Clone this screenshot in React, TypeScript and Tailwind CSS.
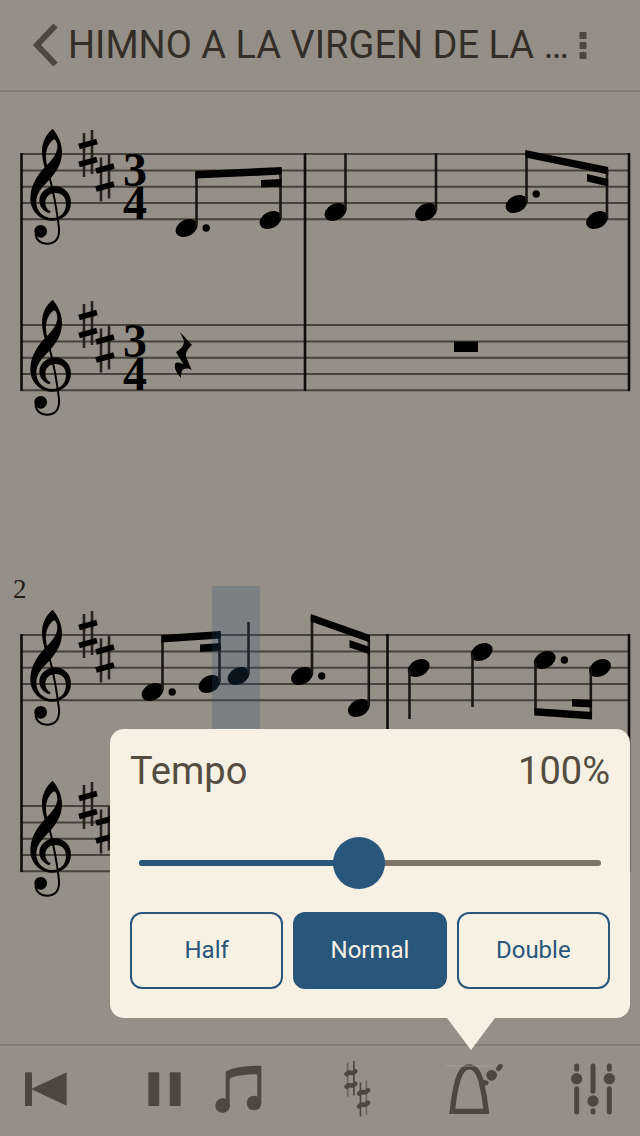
import React, { useState } from 'react';

const STAFF_LINES = [0, 16.4, 32.7, 49, 65.3];
const UPPER_STAFF = 62;
const LOWER_STAFF = 233;

const MIN_TEMPO = 10;
const MAX_TEMPO = 200;

const PRESETS = [
    { label: 'Half', value: 50 },
    { label: 'Normal', value: 100 },
    { label: 'Double', value: 200 },
];

interface NoteProps {
    x: number;
    y: number;
    // y of the free end of the stem
    stem: number;
    down?: boolean;
    dot?: number;
}

function Note({ x, y, stem, down, dot }: NoteProps) {
    const stemX = down ? x - 9.2 : x + 10;
    return (
        <g>
            <ellipse cx={x} cy={y} rx="11.5" ry="8.2" transform={`rotate(-28 ${x} ${y})`} />
            <line x1={stemX} y1={down ? y + 2 : y - 2} x2={stemX} y2={stem} stroke="#191714" strokeWidth="2.6" />
            {dot !== undefined && <circle cx={x + 19.7} cy={dot} r="3.7" />}
        </g>
    );
}

function Beam({ x1, y1, x2, y2 }: { x1: number; y1: number; x2: number; y2: number }) {
    return <polygon points={`${x1},${y1} ${x2},${y2} ${x2},${y2 + 7.6} ${x1},${y1 + 7.6}`} />;
}

function Sharp({ x, y }: { x: number; y: number }) {
    return (
        <g transform={`translate(${x} ${y})`}>
            <path d="M-4 -21V23M4 -24V20" stroke="#24211e" strokeWidth="2.6" />
            <path d="M-9 -7.5L9 -12.5M-9 10.5L9 5.5" stroke="#000" strokeWidth="5.8" />
        </g>
    );
}

function TrebleClef({ y }: { y: number }) {
    return (
        <g transform={`translate(20 ${y - 34}) scale(0.3333)`}>
            <path d="M98 26C112 42 126 68 126 95C126 132 110 154 87 180C64 205 49 220 49 246C49 273 69 294 97 294C123 294 138 275 138 252C138 231 125 219 107 219C89 219 76 231 76 248C76 260 82 269 92 274L88 280C70 273 58 259 58 242C58 218 80 199 106 199C132 199 153 220 153 248C153 280 127 302 97 302C60 302 31 272 31 236C31 200 47 174 65 152C88 127 110 110 112 82C112 70 109 62 103 58C91 63 78 84 78 107C78 130 84 145 89 163L83 165C74 145 66 120 66 95C66 65 80 40 98 26Z" />
            <path d="M86 163Q97 200 105 245Q113 290 117 325Q120 371 80 371Q52 371 46 343" fill="none" stroke="#000" strokeWidth="6" />
            <circle cx="62" cy="334" r="19" />
        </g>
    );
}

function StaffHead({ y, meter }: { y: number; meter?: boolean }) {
    return (
        <g>
            {STAFF_LINES.map((line) => (
                <line key={line} x1="21" x2="630" y1={y + line} y2={y + line} stroke="#46423c" strokeWidth="2" />
            ))}
            <TrebleClef y={y} />
            <Sharp x={88} y={y} />
            <Sharp x={105} y={y + 24.5} />
            {meter && (
                <text className="font-['Liberation_Serif',serif] text-[48px] font-bold" textAnchor="middle">
                    <tspan x="135" y={y + 32}>3</tspan>
                    <tspan x="135" y={y + 65}>4</tspan>
                </text>
            )}
        </g>
    );
}

function Barlines({ xs }: { xs: number[] }) {
    return (
        <g stroke="#0e0d0b" strokeWidth="2.6">
            {xs.map((x) => (
                <line key={x} x1={x} x2={x} y1={UPPER_STAFF - 1} y2={LOWER_STAFF + 66} />
            ))}
        </g>
    );
}

function FirstSystem() {
    return (
        <svg viewBox="0 0 640 481" className="block w-full" role="img" aria-label="Measure 1">
            <StaffHead y={UPPER_STAFF} meter />
            <StaffHead y={LOWER_STAFF} meter />
            <Barlines xs={[21.5, 305, 629]} />

            <Note x={186.5} y={136} stem={80} dot={136} />
            <Note x={270.5} y={128} stem={77} />
            <Beam x1={195.3} y1={79} x2={281.7} y2={75} />
            <Beam x1={261} y1={88} x2={281.7} y2={87} />

            <Note x={335.5} y={120} stem={61} />
            <Note x={426} y={120} stem={61} />
            <Note x={516.5} y={112} stem={60} dot={102} />
            <Note x={597} y={128} stem={77} />
            <Beam x1={525.3} y1={58} x2={608.2} y2={75} />
            <Beam x1={587} y1={82} x2={608.2} y2={87} />

            {/* quarter rest */}
            <path
                transform="translate(0 188) scale(0.3333)"
                d="M540 156L576 195C560 210 554 222 560 234L575 270C555 260 541 267 543 294C530 280 520 262 526 250C532 246 540 248 550 253L528 216C545 205 553 195 552 182Z"
            />
            {/* whole rest */}
            <rect x="454" y="249.5" width="24" height="10.5" />
        </svg>
    );
}

function SecondSystem() {
    return (
        <svg viewBox="0 0 640 360" className="block w-full" role="img" aria-label="Measures 2 and 3">
            <text x="13" y="25" fill="#1f1c19" className="font-['Liberation_Serif',serif] text-[27px]">2</text>
            <StaffHead y={UPPER_STAFF} />
            <StaffHead y={LOWER_STAFF} />
            <Barlines xs={[21.5, 387.5, 629]} />

            <Note x={152.5} y={119} stem={63} dot={119} />
            <Note x={209.5} y={111} stem={60} />
            <Beam x1={161.5} y1={62} x2={220.7} y2={58} />
            <Beam x1={200} y1={71.5} x2={220.7} y2={70} />
            <Note x={238.5} y={103} stem={49} />
            <Note x={302} y={103} stem={43} dot={103} />
            <Note x={358.8} y={135} stem={64} />
            <Beam x1={310.8} y1={41} x2={370} y2={62} />
            <Beam x1={349.5} y1={67} x2={370} y2={74} />

            <Note x={418.7} y={95} stem={146} down />
            <Note x={481.7} y={79} stem={134} down />
            <Note x={544.7} y={87} stem={140} down dot={87} />
            <Note x={600} y={95} stem={145} down />
            <Beam x1={534.3} y1={135} x2={592} y2={139} />
            <Beam x1={572} y1={126} x2={592} y2={127} />

            {/* playback cursor */}
            <rect x="212" y="13" width="48" height="337" fill="#28537a" opacity="0.24" />
        </svg>
    );
}

function ToolButton({ label, children }: { label: string; children: React.ReactNode }) {
    return (
        <button type="button" aria-label={label} className="flex shrink-0 items-center justify-center text-[#4c473f]">
            {children}
        </button>
    );
}

function TempoPanel() {
    const [tempo, setTempo] = useState(100);
    const filled = ((tempo - MIN_TEMPO) / (MAX_TEMPO - MIN_TEMPO)) * 100;

    return (
        <section className="absolute right-2.5 bottom-[118px] left-[110px] rounded-[14px] bg-[#f7f1e3] px-5 pt-4 pb-[29px]">
            <div className="flex justify-between text-[38px] leading-[52px] text-[#544c3f]">
                <label htmlFor="tempo">Tempo</label>
                <output htmlFor="tempo">{tempo}%</output>
            </div>

            <div className="relative mx-[9px] mt-10 h-[52px]">
                <div className="absolute inset-x-0 top-[23px] h-1.5 overflow-hidden rounded-full bg-[#7d7568]">
                    <div className="h-full bg-[#29567b]" style={{ width: `${filled}%` }} />
                </div>
                <input
                    id="tempo"
                    type="range"
                    min={MIN_TEMPO}
                    max={MAX_TEMPO}
                    value={tempo}
                    onChange={(e) => setTempo(Number(e.target.value))}
                    className="relative block h-[52px] w-full cursor-pointer appearance-none bg-transparent [&::-webkit-slider-thumb]:h-[52px] [&::-webkit-slider-thumb]:w-[52px] [&::-webkit-slider-thumb]:appearance-none [&::-webkit-slider-thumb]:rounded-full [&::-webkit-slider-thumb]:bg-[#29567b]"
                />
            </div>

            <div className="mt-[23px] grid grid-cols-3 gap-2.5">
                {PRESETS.map((preset) => (
                    <button
                        key={preset.label}
                        type="button"
                        aria-pressed={tempo === preset.value}
                        onClick={() => setTempo(preset.value)}
                        className={`h-[77px] rounded-xl border-2 border-[#29567b] pb-0.5 text-2xl ${
                            tempo === preset.value ? 'bg-[#29567b] text-[#f7f1e3]' : 'text-[#29567b]'
                        }`}
                    >
                        {preset.label}
                    </button>
                ))}
            </div>

            <svg viewBox="0 0 48 32" className="absolute top-full right-[135px] w-12" fill="#f7f1e3" aria-hidden="true">
                <polygon points="0,0 48,0 24,32" />
            </svg>
        </section>
    );
}

export default function App() {
    return (
        <div className="relative flex min-h-screen flex-col bg-[#959087] font-[Roboto,sans-serif]">
            <header className="flex h-[92px] items-center border-b-2 border-[#7f7a72] pr-[53px] pl-8">
                <button type="button" aria-label="Back" className="shrink-0 text-[#4c473f]">
                    <svg viewBox="0 0 26 44" className="block w-[26px]" fill="none" stroke="currentColor" strokeWidth="6">
                        <path d="M23.5 2.5L5 22L23.5 41.5" />
                    </svg>
                </button>
                <h1 className="ml-2.5 min-w-0 flex-1 truncate text-[38px] leading-[52px] text-[#332e27]">
                    HIMNO A LA VIRGEN DE LA …
                </h1>
                <button type="button" aria-label="More options" className="shrink-0 text-[#4c473f]">
                    <svg viewBox="0 0 8 28" className="block w-2" fill="currentColor">
                        <rect x="0.5" y="1" width="7" height="7" rx="1" />
                        <rect x="0.5" y="11" width="7" height="7" rx="1" />
                        <rect x="0.5" y="21" width="7" height="7" rx="1" />
                    </svg>
                </button>
            </header>

            <main className="flex-1">
                <FirstSystem />
                <SecondSystem />
            </main>

            <footer className="grid h-[92px] grid-cols-[92fr_226fr_78fr_158fr_78fr] items-center justify-items-center border-t-2 border-[#7f7a72] pr-2 pb-1">
                <ToolButton label="Back to start">
                    <svg viewBox="76 95 126 104" className="w-[42px]" fill="currentColor">
                        <rect x="76" y="96" width="21" height="102" rx="3" />
                        <path d="M94 146L201 96V196Z" />
                    </svg>
                </ToolButton>
                <div className="flex items-center gap-[34px]">
                    <ToolButton label="Pause">
                        <svg viewBox="443 95 100 104" className="w-[33px]" fill="currentColor">
                            <rect x="444" y="96" width="33" height="102" rx="3" />
                            <rect x="509" y="96" width="33" height="102" rx="3" />
                        </svg>
                    </ToolButton>
                    <ToolButton label="Instruments">
                        <svg viewBox="646 76 141 146" className="w-[47px]" fill="currentColor">
                            <path d="M678 98Q678 95 681 94Q715 77 782 78Q785 78 785 81V190H773V108Q773 104 769 104Q720 105 694 114Q690 115 690 120V198H678Z" />
                            <circle cx="669" cy="198" r="22" />
                            <circle cx="763" cy="190" r="22" />
                        </svg>
                    </ToolButton>
                </div>
                <ToolButton label="Transpose">
                    <svg viewBox="70 90 82 174" className="w-[27px]" fill="none" stroke="currentColor">
                        <path d="M81 98V202M138 152V256" strokeWidth="5" opacity="0.6" />
                        <path d="M100 92V198M120 158V262" strokeWidth="5" />
                        <path
                            d="M78 133Q84 127 91 129T104 124M78 171Q84 165 91 167T104 162M116 192Q122 186 129 188T143 182M116 231Q122 224 129 226T143 220"
                            strokeWidth="14"
                            strokeLinecap="round"
                        />
                    </svg>
                </ToolButton>
                <ToolButton label="Tempo">
                    <svg viewBox="378 96 174 162" className="w-[58px]" fill="none" stroke="currentColor">
                        <path d="M397 244C401 205 405 180 413 152C428 97 468 97 483 152C490 180 495 205 499 244Z" strokeWidth="16" />
                        <path d="M494 158L498 159M536 116L541 109" strokeWidth="15" strokeLinecap="round" />
                        <circle cx="515" cy="136" r="16" fill="currentColor" stroke="none" />
                        <path d="M378 108H520" stroke="#aaa59c" strokeWidth="3" opacity="0.7" />
                    </svg>
                </ToolButton>
                <ToolButton label="Mixer">
                    <svg viewBox="752 98 132 156" className="w-11" fill="none" stroke="currentColor">
                        <path d="M769 107V117M769 175V245M818 107V183M818 241V245M867 107V117M867 175V245" strokeWidth="15" strokeLinecap="round" />
                        <g fill="currentColor" stroke="#959087" strokeWidth="4">
                            <circle cx="769" cy="145" r="19" />
                            <circle cx="818" cy="212" r="19" />
                            <circle cx="867" cy="145" r="19" />
                        </g>
                    </svg>
                </ToolButton>
            </footer>

            <TempoPanel />
        </div>
    );
}
